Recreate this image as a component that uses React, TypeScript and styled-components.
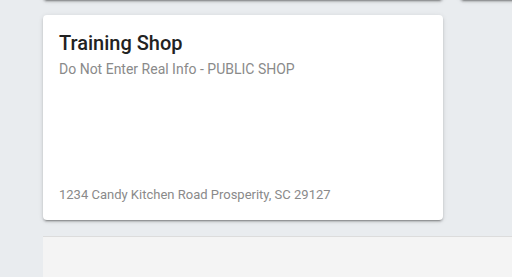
import React from "react";
import styled, { createGlobalStyle } from "styled-components";

const GlobalStyle = createGlobalStyle`
  html, body {
    margin: 0;
    padding: 0;
    background: #e9ecef;
    font-family: Roboto, "Liberation Sans", sans-serif;
    overflow: hidden;
  }
`;

const Viewport = styled.div`
  width: 512px;
  height: 277px;
  overflow: hidden;
`;

const Page = styled.div`
  padding-left: 43px;
  width: 900px;
`;

const CardGrid = styled.div`
  display: grid;
  grid-template-columns: 400px 400px;
  column-gap: 17px;
  row-gap: 15px;
  margin-top: -205px;
`;

const Card = styled.div`
  height: 205px;
  background: #fff;
  border-radius: 4px;
  box-shadow: 0 2px 2px 0 rgba(0, 0, 0, 0.16), 0 3px 1px -2px rgba(0, 0, 0, 0.22),
    0 1px 5px 0 rgba(0, 0, 0, 0.12);
  padding: 16px;
  box-sizing: border-box;
  display: flex;
  flex-direction: column;
`;

const Title = styled.h2`
  margin: 0;
  font-size: 20px;
  font-weight: 500;
  line-height: 24px;
  color: #222;
`;

const Subtitle = styled.div`
  margin-top: 4px;
  font-size: 14px;
  line-height: 20px;
  color: #8a8a8a;
`;

const Address = styled.div`
  margin-top: auto;
  font-size: 13px;
  line-height: 18px;
  color: #8a8a8a;
`;

const Footer = styled.div`
  margin-top: 16px;
  height: 60px;
  background: #f4f4f4;
  border-top: 1px solid #dcdcdc;
`;

const shops = [
  { title: "", subtitle: "", address: "" },
  { title: "", subtitle: "", address: "" },
  {
    title: "Training Shop",
    subtitle: "Do Not Enter Real Info - PUBLIC SHOP",
    address: "1234 Candy Kitchen Road Prosperity, SC 29127",
  },
];

const App: React.FC = () => {
  return (
    <>
      <GlobalStyle />
      <Viewport>
        <Page>
          <CardGrid>
            {shops.map((s, i) => (
              <Card key={i}>
                {s.title && <Title>{s.title}</Title>}
                {s.subtitle && <Subtitle>{s.subtitle}</Subtitle>}
                {s.address && <Address>{s.address}</Address>}
              </Card>
            ))}
          </CardGrid>
          <Footer />
        </Page>
      </Viewport>
    </>
  );
};

export default App;
